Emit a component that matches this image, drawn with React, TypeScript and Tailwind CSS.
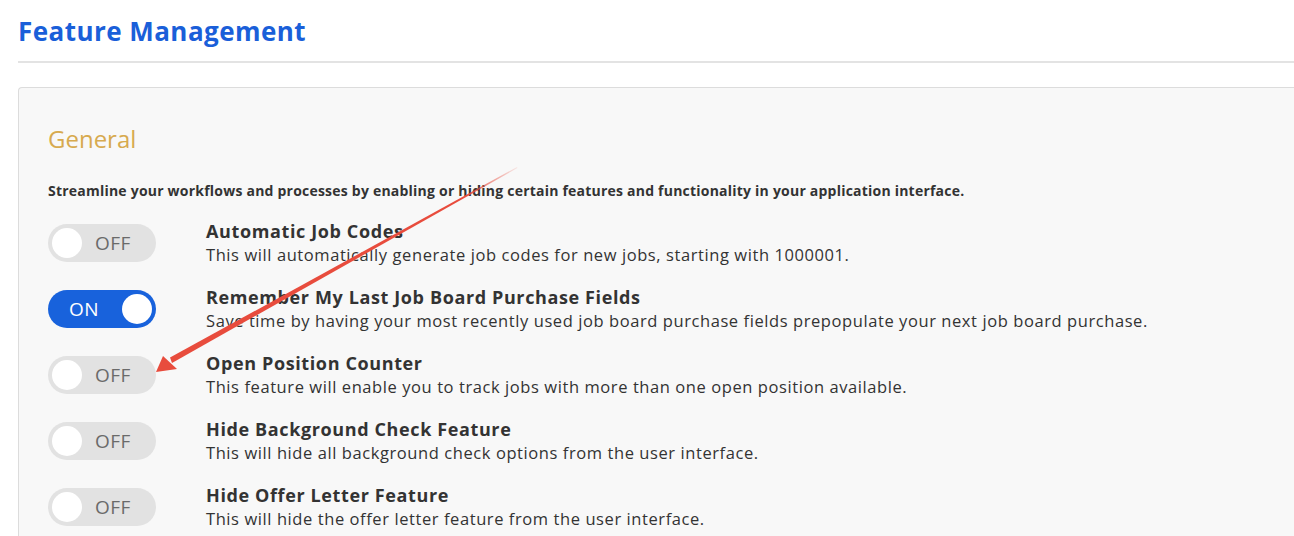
const FONT = "font-['Open_Sans','Lato',sans-serif]"

interface Feature {
  title: string
  description: string
  enabled: boolean
}

const features: Feature[] = [
  {
    title: 'Automatic Job Codes',
    description: 'This will automatically generate job codes for new jobs, starting with 1000001.',
    enabled: false,
  },
  {
    title: 'Remember My Last Job Board Purchase Fields',
    description:
      'Save time by having your most recently used job board purchase fields prepopulate your next job board purchase.',
    enabled: true,
  },
  {
    title: 'Open Position Counter',
    description: 'This feature will enable you to track jobs with more than one open position available.',
    enabled: false,
  },
  {
    title: 'Hide Background Check Feature',
    description: 'This will hide all background check options from the user interface.',
    enabled: false,
  },
  {
    title: 'Hide Offer Letter Feature',
    description: 'This will hide the offer letter feature from the user interface.',
    enabled: false,
  },
]

function Toggle({ on }: { on: boolean }) {
  if (on) {
    return (
      <div className="flex items-center w-[108px] h-[38px] rounded-full bg-[#1862dc] pl-[21px] pr-[4px] shrink-0">
        <span className="text-white text-[19px] tracking-[0.5px] leading-none">ON</span>
        <span className="ml-auto w-[30px] h-[30px] rounded-full bg-white" />
      </div>
    )
  }
  return (
    <div className="flex items-center w-[108px] h-[38px] rounded-full bg-[#e2e2e2] pl-[4px] shrink-0">
      <span className="w-[30px] h-[30px] rounded-full bg-white" />
      <span className="ml-[13px] text-[#6a6a6a] text-[19px] tracking-[0.5px] leading-none">OFF</span>
    </div>
  )
}

function FeatureRow({ feature }: { feature: Feature }) {
  return (
    <li className="flex items-center h-[66px]">
      <div className="w-[158px] flex">
        <Toggle on={feature.enabled} />
      </div>
      <div className="flex flex-col -mt-[1px]">
        <span className="text-[18px] font-bold tracking-[0.62px] text-[#333] leading-[24px]">{feature.title}</span>
        <span className="mt-[1px] text-[16.5px] tracking-[0.58px] text-[#333] leading-[22px]">
          {feature.description}
        </span>
      </div>
    </li>
  )
}

export default function App() {
  return (
    <div className={`${FONT} relative bg-white h-[536px] overflow-hidden`}>
      <div className="pl-[18px]">
        <h1 className="pt-[14px] h-[61px] text-[26px] font-bold tracking-[0.45px] text-[#1a5fd9] leading-[34px]">
          Feature Management
        </h1>
        <div className="h-[2px] bg-[#e3e3e3]" />
        <section className="mt-[24px] border border-[#dcdcdc] border-r-0 rounded-tl-[4px] bg-[#f8f8f8] pl-[29px] pt-[33px] h-[480px]">
          <h2 className="text-[24px] text-[#d7aa4f] leading-[36px]">General</h2>
          <p className="mt-[25px] text-[14px] font-bold tracking-[0.22px] text-[#333] leading-[18px]">
            Streamline your workflows and processes by enabling or hiding certain features and functionality in your
            application interface.
          </p>
          <ul className="mt-[10px] flex flex-col">
            {features.map(f => (
              <FeatureRow key={f.title} feature={f} />
            ))}
          </ul>
        </section>
      </div>

      {/* annotation arrow drawn over the screenshot */}
      <svg className="absolute left-0 top-0 pointer-events-none" width="1294" height="536" viewBox="0 0 1294 536">
        <defs>
          <linearGradient id="fade" x1="517" y1="167" x2="160" y2="368" gradientUnits="userSpaceOnUse">
            <stop offset="0" stopColor="#e84c3d" stopOpacity="0.1" />
            <stop offset="0.15" stopColor="#e84c3d" stopOpacity="1" />
            <stop offset="1" stopColor="#e84c3d" />
          </linearGradient>
        </defs>
        <polygon points="517,167 517.5,168 172,363 170,357.5" fill="url(#fade)" />
        <polygon points="156,372 163,356 177,369" fill="#e84c3d" />
      </svg>
    </div>
  )
}
